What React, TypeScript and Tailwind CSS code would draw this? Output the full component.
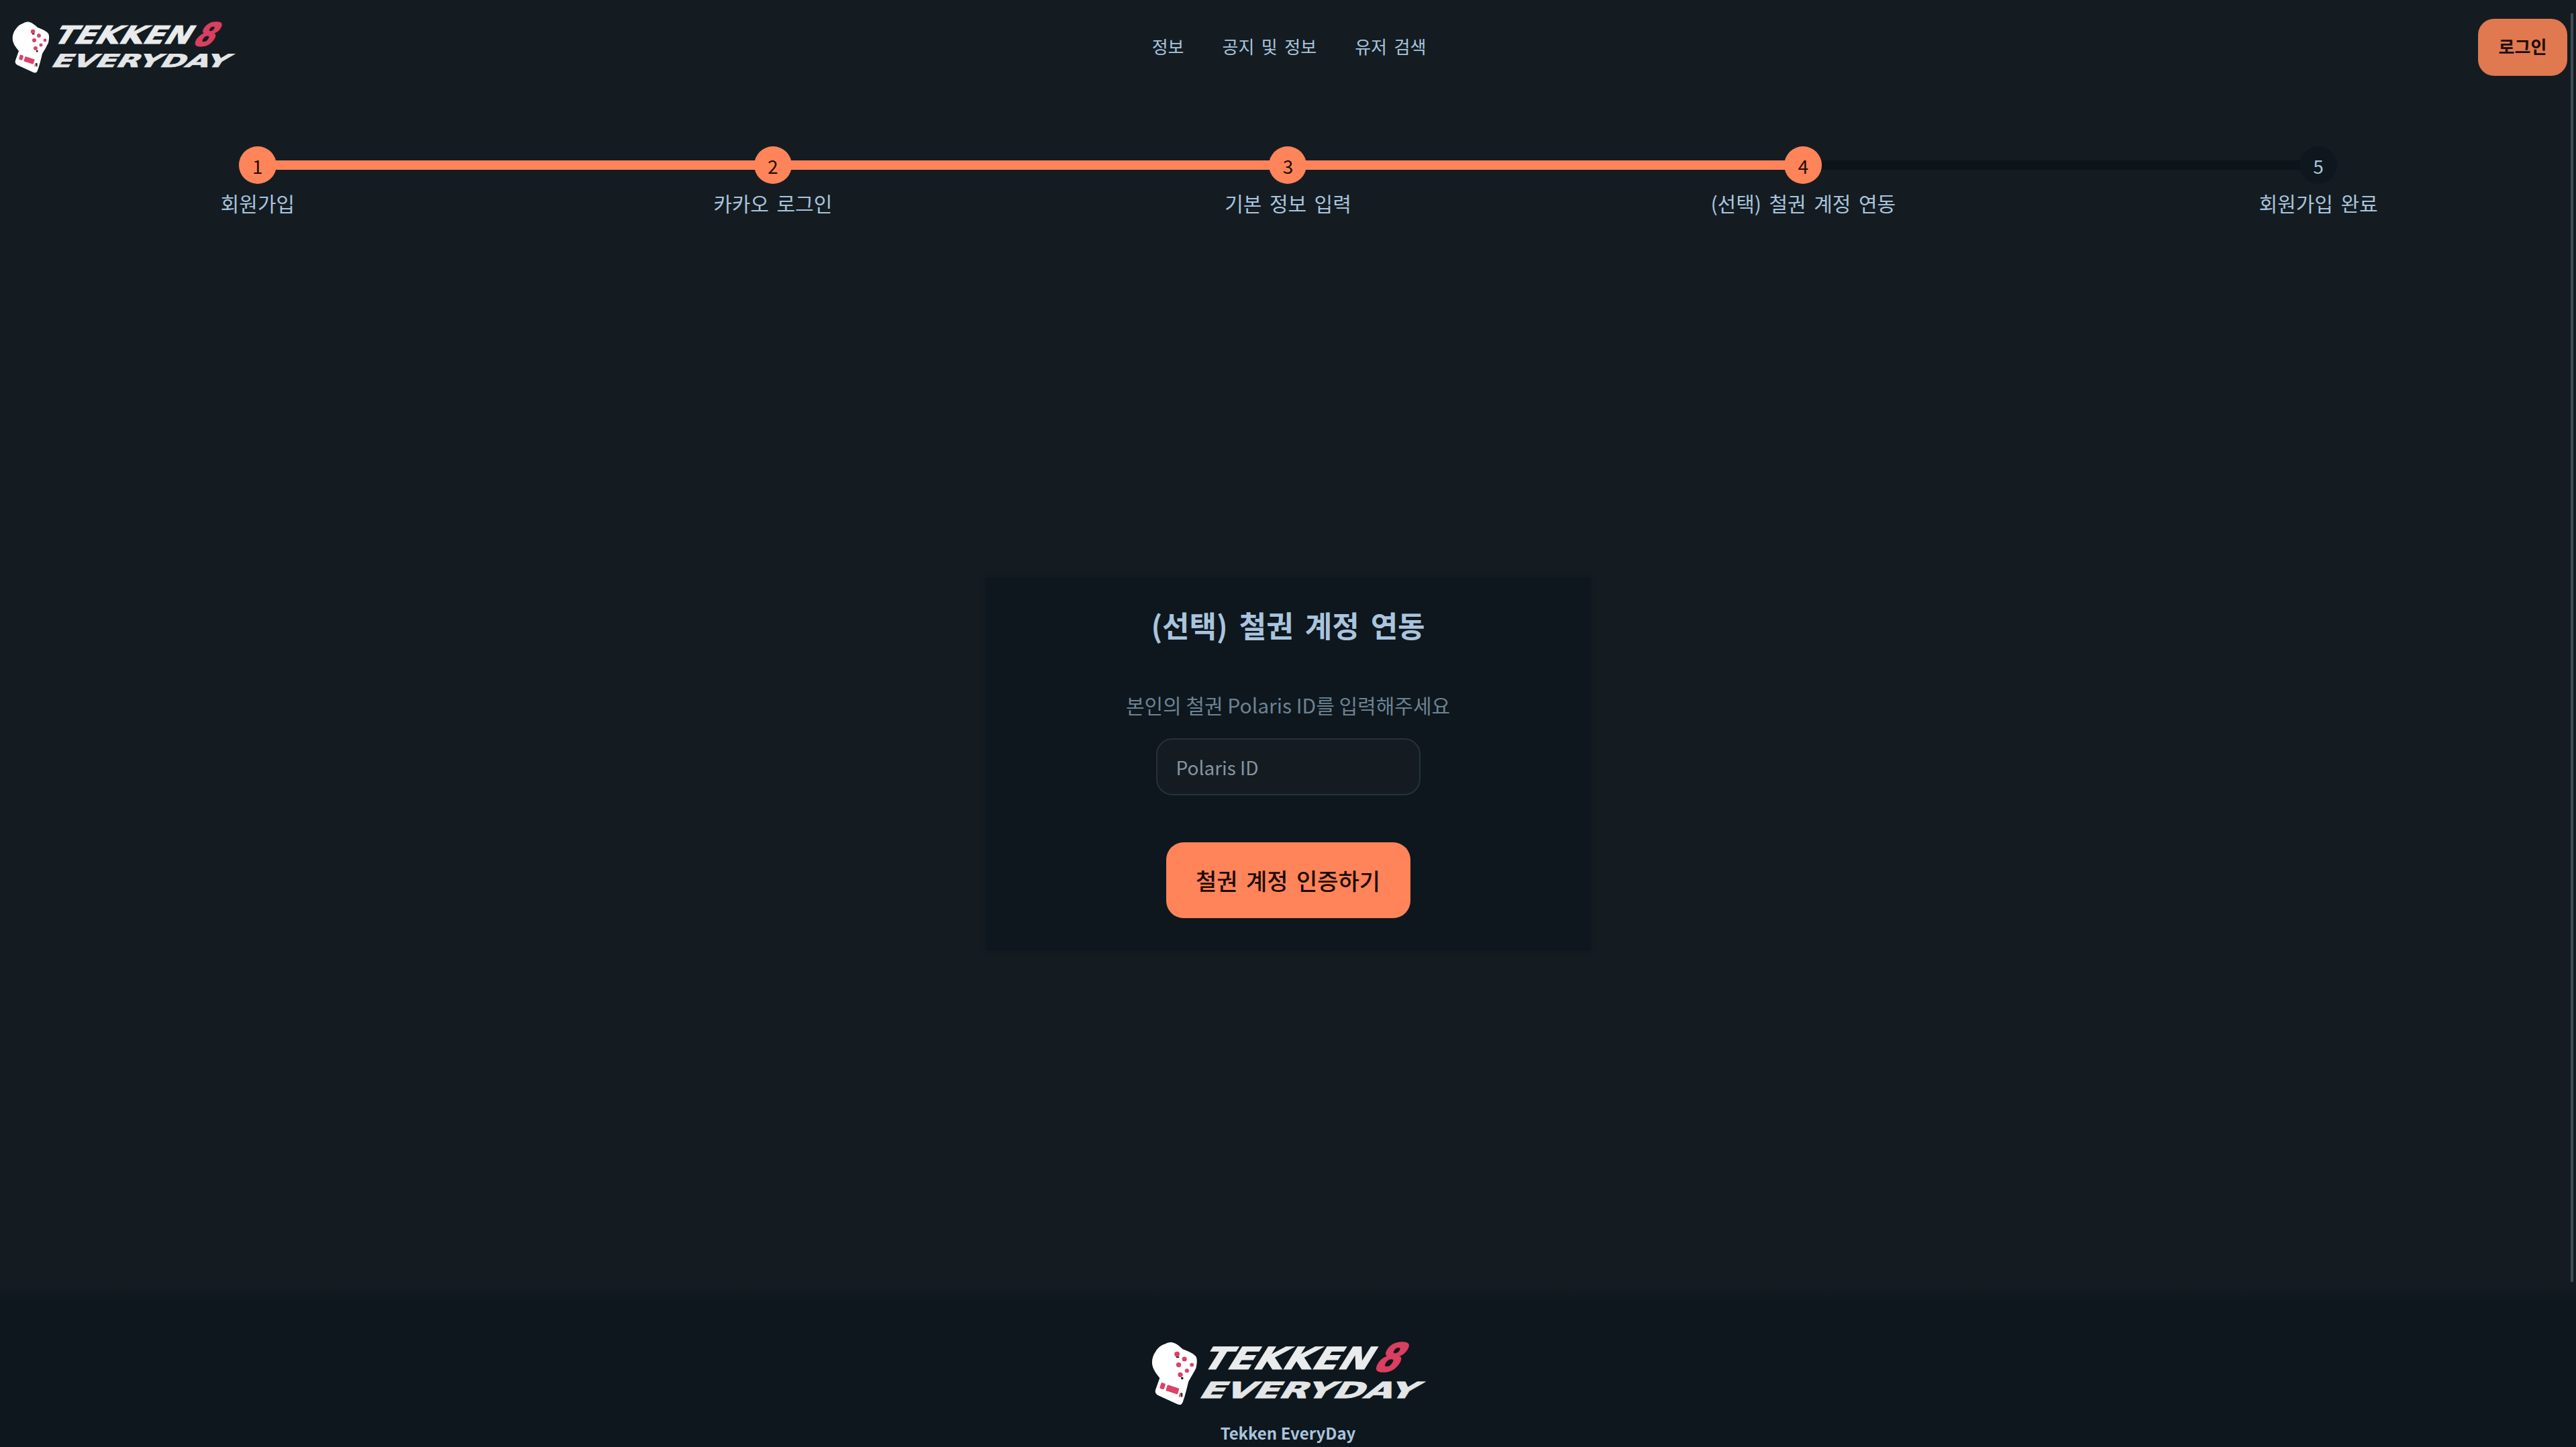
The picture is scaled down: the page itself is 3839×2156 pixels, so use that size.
import React from "react";

const steps = [
  { n: 1, label: "회원가입", done: true },
  { n: 2, label: "카카오 로그인", done: true },
  { n: 3, label: "기본 정보 입력", done: true },
  { n: 4, label: "(선택) 철권 계정 연동", done: true },
  { n: 5, label: "회원가입 완료", done: false },
];

const Logo: React.FC<{ className: string }> = ({ className }) => (
  <svg viewBox="18 33 332 75" className={`overflow-visible ${className}`}>
    {/* glove */}
    <path
      d="M23 44 C26 39 30 36 34 35 C37 33 41 32 44 33 C48 34 52 37 56 41 C62 43 69 46 72 50 C74 54 73 59 72 64 C69 70 66 75 63 80 C61 88 59 97 56 105 C55 108 53 109 50 108 L26 97 C23 95 22 93 23 90 L28 76 C24 71 20 66 19 60 C18 54 20 48 23 44 Z"
      fill="#ffffff"
    />
    <g fill="#d8436a">
      <circle cx="49" cy="47" r="3.2" />
      <circle cx="58" cy="53" r="2.9" />
      <circle cx="51" cy="60" r="3" />
      <circle cx="67" cy="60" r="2.4" />
      <circle cx="61" cy="67" r="2.5" />
      <circle cx="53" cy="72" r="3" />
      <rect x="36" y="86" width="15" height="7.5" rx="1" transform="rotate(18 43 90)" />
      <rect x="29" y="82" width="5.5" height="7.5" rx="1.5" transform="rotate(18 32 85)" />
      <rect x="52" y="94" width="2" height="5" transform="rotate(18 53 96)" />
    </g>
    <g fill="#111">
      <rect x="48" y="50" width="3.5" height="1.4" />
      <rect x="54" y="75" width="2.5" height="2.5" />
      <rect x="54" y="94" width="1.6" height="5" />
    </g>
    {/* wordmark */}
    <g fontFamily="'DejaVu Sans', sans-serif" fontWeight="700">
      <text
        transform="translate(76 65) skewX(-32)"
        fontSize="37"
        fill="#e9ebec"
        stroke="#e9ebec"
        strokeWidth="0.8"
        textLength="204"
        lengthAdjust="spacingAndGlyphs"
      >
        TEKKEN
      </text>
      <text
        transform="translate(285 68) skewX(-32)"
        fontSize="47"
        fill="#d93f60"
        stroke="#d93f60"
        strokeWidth="1.6"
        textLength="30"
        lengthAdjust="spacingAndGlyphs"
      >
        8
      </text>
      <text
        transform="translate(74 100) skewX(-32)"
        fontSize="27"
        fill="#e3e5e6"
        stroke="#e3e5e6"
        strokeWidth="0.7"
        textLength="263"
        lengthAdjust="spacingAndGlyphs"
      >
        EVERYDAY
      </text>
    </g>
  </svg>
);

const Stepper: React.FC = () => (
  <div className="grid grid-cols-5 pt-[78px]">
    {steps.map((s, i) => (
      <div key={s.n} className="relative flex flex-col items-center">
        {i < steps.length - 1 && (
          <div
            className={`absolute left-1/2 top-[21px] h-[14px] w-full ${
              s.n < 4 ? "bg-[#ff845a]" : "bg-[#0b1418]"
            }`}
          />
        )}
        <div
          className={`relative flex h-[56px] w-[56px] items-center justify-center rounded-full pt-[1px] text-[28px] ${
            s.done ? "bg-[#ff845a] text-[#1d0b04]" : "bg-[#0e171d] text-[#a9c4dd]"
          }`}
        >
          {s.n}
        </div>
        <span className="mt-[6px] text-[30px] leading-[44px] text-[#a9c4dd] [word-spacing:0.16em]">{s.label}</span>
      </div>
    ))}
  </div>
);

export default function App() {
  return (
    <div className="relative flex h-[2156px] flex-col overflow-hidden bg-[#141c22] font-['Noto_Sans_CJK_KR',sans-serif]">
      {/* Scrollbar */}
      <div className="absolute right-[4px] top-[20px] h-[1890px] w-[4px] bg-[#3f4c54]" />

      {/* Header */}
      <header className="grid h-[140px] grid-cols-[1fr_auto_1fr] items-center pl-[18px] pr-[13px]">
        <Logo className="h-[75px] w-[332px]" />
        <nav className="flex gap-[57px] pb-[3px] pr-[2px] text-[26px] text-[#a9c4dd] [word-spacing:0.18em]">
          <a>정보</a>
          <a>공지 및 정보</a>
          <a>유저 검색</a>
        </nav>
        <button className="h-[85px] w-[133px] justify-self-end rounded-[24px] bg-[#e07850] pb-[3px] text-[26px] font-bold text-[#1d0b04]">
          로그인
        </button>
      </header>

      <Stepper />

      {/* Card */}
      <main className="flex flex-1 items-start justify-center pt-[537px]">
        <div className="flex h-[555px] w-[902px] flex-col items-center bg-[#0e171d] pt-[38px] shadow-[0_0_6px_#0e171d]">
          <h1 className="text-[44px] font-bold leading-[64px] text-[#a9c4dd] [word-spacing:0.16em]">(선택) 철권 계정 연동</h1>
          <p className="mt-[65px] text-[30px] leading-[44px] text-[#6d8293]">본인의 철권 Polaris ID를 입력해주세요</p>
          <input
            placeholder="Polaris ID"
            className="mt-[28px] h-[85px] w-[394px] rounded-[24px] border-2 border-[#263138] bg-[#141c22] px-[28px] text-[28px] text-[#a9c4dd] outline-none placeholder:text-[#8595a1]"
          />
          <button className="mt-[70px] h-[113px] w-[364px] rounded-[26px] bg-[#ff845a] text-[34px] font-medium text-[#1d0b04] [word-spacing:0.14em]">
            철권 계정 인증하기
          </button>
        </div>
      </main>

      {/* Footer */}
      <footer className="flex h-[240px] flex-col items-center bg-[linear-gradient(#141c22,#0e171d_24px)] pt-[84px]">
        <Logo className="h-[93px] w-[408px]" />
        <span className="mt-[23px] text-[24px] font-semibold leading-[38px] text-[#a9c4dd]">Tekken EveryDay</span>
      </footer>
    </div>
  );
}
